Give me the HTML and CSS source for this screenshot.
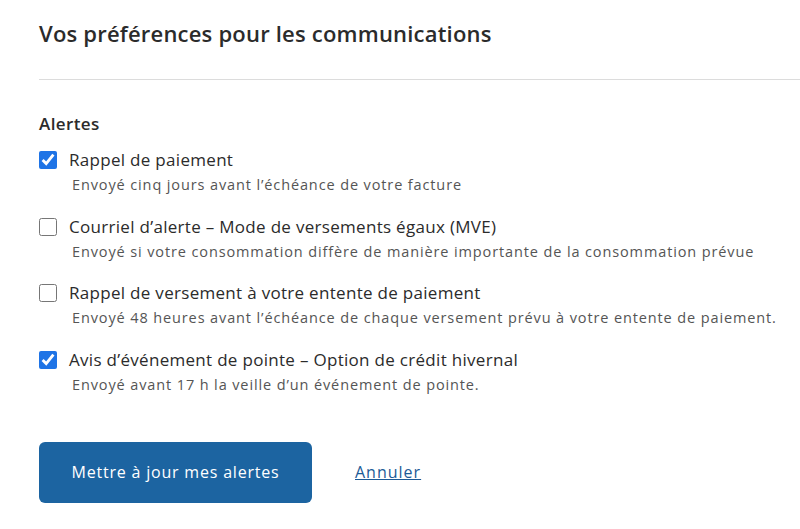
FILE: index.html
```html
<!DOCTYPE html>
<html lang="fr">
<head>
    <meta charset="UTF-8">
    <title>Vos préférences pour les communications</title>
    <link rel="stylesheet" href="styles.css">
</head>
<body>
    <div class="container">
        <h1 class="page-title">Vos préférences pour les communications</h1>
        <hr class="divider">

        <form class="alerts-form">
            <h2 class="section-title">Alertes</h2>

            <div class="alert-option">
                <input type="checkbox" id="alert1" checked>
                <div class="alert-text">
                    <label for="alert1">Rappel de paiement</label>
                    <p class="alert-desc">Envoyé cinq jours avant l’échéance de votre facture</p>
                </div>
            </div>

            <div class="alert-option">
                <input type="checkbox" id="alert2">
                <div class="alert-text">
                    <label for="alert2">Courriel d’alerte – Mode de versements égaux (MVE)</label>
                    <p class="alert-desc">Envoyé si votre consommation diffère de manière importante de la consommation prévue</p>
                </div>
            </div>

            <div class="alert-option">
                <input type="checkbox" id="alert3">
                <div class="alert-text">
                    <label for="alert3">Rappel de versement à votre entente de paiement</label>
                    <p class="alert-desc">Envoyé 48 heures avant l’échéance de chaque versement prévu à votre entente de paiement.</p>
                </div>
            </div>

            <div class="alert-option">
                <input type="checkbox" id="alert4" checked>
                <div class="alert-text">
                    <label for="alert4">Avis d’événement de pointe – Option de crédit hivernal</label>
                    <p class="alert-desc">Envoyé avant 17 h la veille d’un événement de pointe.</p>
                </div>
            </div>

            <div class="form-actions">
                <button type="submit" class="submit-btn">Mettre à jour mes alertes</button>
                <a href="#" class="cancel-link">Annuler</a>
            </div>
        </form>
    </div>
</body>
</html>
```

FILE: styles.css
```css
body {
    margin: 0;
    padding: 0;
    font-family: 'Open Sans', 'DejaVu Sans', sans-serif;
    background-color: #ffffff;
    color: #2b2b2b;
}

.container {
    padding: 17px 0 0 39px;
}

.page-title {
    margin: 0;
    font-size: 22px;
    font-weight: 600;
    line-height: 32px;
    letter-spacing: 0.2px;
    color: #2b2b2b;
}

.divider {
    margin: 30px 0 0 0;
    border: none;
    border-top: 1px solid #dcdcdc;
}

.section-title {
    margin: 32px 0 0 0;
    font-size: 17px;
    font-weight: 600;
    line-height: 24px;
    letter-spacing: 0.4px;
}

.alert-option {
    display: flex;
    align-items: flex-start;
    gap: 12px;
    margin-top: 12px;
}

.alert-option + .alert-option {
    margin-top: 18.5px;
}

.alert-option input[type="checkbox"] {
    width: 18px;
    height: 18px;
    margin: 3px 0 0 0;
    accent-color: #1f74e6;
}

.alert-option label {
    display: block;
    font-size: 17px;
    line-height: 24px;
    letter-spacing: 0.3px;
    color: #2b2b2b;
}

.alert-desc {
    margin: 2px 0 0 3px;
    font-size: 14.5px;
    line-height: 22px;
    color: #555555;
    letter-spacing: 0.88px;
}

.form-actions {
    display: flex;
    align-items: center;
    gap: 43px;
    margin-top: 46px;
}

.submit-btn {
    background: #1c64a1;
    color: white;
    width: 273px;
    height: 61px;
    border: none;
    border-radius: 6px;
    font-family: inherit;
    font-size: 16px;
    letter-spacing: 0.8px;
    cursor: pointer;
}

.cancel-link {
    color: #1c5a96;
    font-size: 16px;
    letter-spacing: 1px;
    text-decoration: underline;
}
```
